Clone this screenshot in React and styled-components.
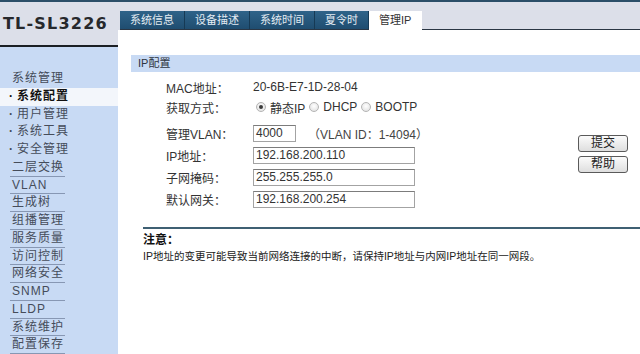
import React from "react";
import styled, { createGlobalStyle } from "styled-components";

const GlobalStyle = createGlobalStyle`
  html, body {
    margin: 0;
    padding: 0;
    background: #ffffff;
  }
  body {
    font-family: "Liberation Sans", "Noto Sans CJK SC", sans-serif;
    font-size: 12px;
    color: #333333;
  }
`;

const Page = styled.div`
  width: 640px;
  height: 354px;
  overflow: hidden;
  border-top: 2px solid #2b4e68;
  box-sizing: border-box;
  display: grid;
  grid-template-columns: 118px 1fr;
  grid-template-rows: 100%;
`;

const LeftColumn = styled.aside`
  display: flex;
  flex-direction: column;
  background: #c8daf4;
`;

const LogoBox = styled.div`
  height: 46px;
  background: #dcdfe9;
  border-bottom: 2px solid #1b1f24;
  display: flex;
  align-items: center;
  padding-left: 3px;
  font-family: "DejaVu Sans", sans-serif;
  font-weight: bold;
  font-size: 16px;
  letter-spacing: 1.2px;
  color: #26282c;
`;

const Menu = styled.ul`
  list-style: none;
  margin: 0;
  padding: 23px 0 0 0;
`;

const MenuItem = styled.li`
  height: 17.75px;
  line-height: 17.75px;
  box-sizing: border-box;
  padding-left: ${({ $sub }) => ($sub ? "9px" : "12px")};
  font-size: 12px;
  letter-spacing: 1px;
  color: ${({ $active }) => ($active ? "#111111" : "#454c5a")};
  font-weight: ${({ $active }) => ($active ? "bold" : "normal")};
  background: ${({ $active }) => ($active ? "#f3f6fb" : "transparent")};
  position: relative;

  &::after {
    content: "";
    display: ${({ $line }) => ($line ? "block" : "none")};
    position: absolute;
    left: 10px;
    width: 55px;
    bottom: 0;
    height: 1px;
    background: #8797b3;
  }
`;

const Bullet = styled.span`
  margin-right: 3px;
  font-weight: bold;
`;

const RightColumn = styled.main`
  display: flex;
  flex-direction: column;
  min-width: 0;
`;

const TopBar = styled.div`
  height: 28px;
  background: #dcdfe9;
  box-sizing: border-box;
  display: flex;
  align-items: flex-end;
  padding-left: 2px;
`;

const Tabs = styled.nav`
  display: flex;
  flex: 1;
  height: 18px;
  border-bottom: 1px solid #2a3644;
`;

const Tab = styled.div`
  height: 18px;
  box-sizing: border-box;
  padding: 0 10px;
  line-height: 18px;
  font-size: 11px;
  white-space: nowrap;
  color: ${({ $active }) => ($active ? "#333333" : "#e4ecf3")};
  background: ${({ $active }) =>
    $active ? "#ffffff" : "linear-gradient(#2f6389, #1f4d70)"};
  border-right: 1px solid ${({ $active }) => ($active ? "#ffffff" : "#163a55")};
  ${({ $active }) =>
    $active ? "height: 20px; margin-bottom: -2px; position: relative;" : ""}
`;

const TabFill = styled.div`
  flex: 1;
`;

const Content = styled.section`
  display: flex;
  flex-direction: column;
  padding-top: 25px;
`;

const SectionBar = styled.div`
  margin-left: 13px;
  height: 17px;
  line-height: 17px;
  background: #c8daf4;
  padding-left: 7px;
  font-size: 11px;
  color: #2d3440;
`;

const FormArea = styled.div`
  display: flex;
  padding-top: 5px;
`;

const Fields = styled.div`
  display: flex;
  flex-direction: column;
`;

const FieldRow = styled.div`
  display: grid;
  grid-template-columns: 87px auto;
  align-items: center;
  height: ${({ $tall }) => ($tall ? "22px" : "20px")};
  margin-bottom: ${({ $gap }) => $gap || 0}px;
  padding-left: 48px;
`;

const Label = styled.span`
  font-size: 12px;
  color: #333333;
  white-space: nowrap;
`;

const Value = styled.div`
  display: flex;
  align-items: center;
  font-size: 12px;
  color: #333333;
  white-space: nowrap;
`;

const TextBox = styled.div`
  width: ${({ $w }) => $w}px;
  height: 17px;
  box-sizing: border-box;
  border: 1px solid #a3a3a3;
  border-top-color: #7c7c7c;
  background: #ffffff;
  padding-left: 2px;
  line-height: 15px;
  font-size: 12px;
  color: #333333;
`;

const Hint = styled.span`
  margin-left: 12px;
  font-size: 12px;
  color: #444444;
`;

const RadioOption = styled.label`
  display: inline-flex;
  align-items: center;
  margin-right: 4px;
  margin-left: ${({ $first }) => ($first ? "3px" : "0")};
`;

const RadioDot = styled.span`
  width: 10px;
  height: 10px;
  box-sizing: border-box;
  border-radius: 50%;
  border: 1px solid #b4b4b4;
  background: radial-gradient(circle at 50% 40%, #ffffff, #dcdcdc);
  margin-right: 4px;
  position: relative;

  &::after {
    content: "";
    display: ${({ $checked }) => ($checked ? "block" : "none")};
    position: absolute;
    left: 2px;
    top: 2px;
    width: 4px;
    height: 4px;
    border-radius: 50%;
    background: #3c3c3c;
  }
`;

const Actions = styled.div`
  margin-left: auto;
  margin-right: 12px;
  margin-top: 58px;
  display: flex;
  flex-direction: column;
  gap: 4px;
`;

const Button = styled.button`
  width: 50px;
  height: 17px;
  padding: 0;
  border: 1px solid #5a5a5a;
  border-radius: 3px;
  background: linear-gradient(#fbfbfb, #dedede);
  font-family: "Liberation Sans", "Noto Sans CJK SC", sans-serif;
  font-size: 12px;
  line-height: 15px;
  color: #222222;
`;

const Notice = styled.div`
  margin-top: 17px;
  margin-left: 25px;
  border-top: 2px solid #3f6073;
  padding-top: 3px;
`;

const NoticeTitle = styled.div`
  font-size: 12px;
  font-weight: bold;
  line-height: 16px;
  color: #111111;
`;

const NoticeText = styled.p`
  margin: 0;
  font-size: 10.5px;
  line-height: 16px;
  color: #222222;
`;

const menu = [
  { label: "系统管理" },
  { label: "系统配置", sub: true, active: true },
  { label: "用户管理", sub: true },
  { label: "系统工具", sub: true },
  { label: "安全管理", sub: true },
  { label: "二层交换", line: true },
  { label: "VLAN", line: true },
  { label: "生成树", line: true },
  { label: "组播管理", line: true },
  { label: "服务质量", line: true },
  { label: "访问控制", line: true },
  { label: "网络安全", line: true },
  { label: "SNMP", line: true },
  { label: "LLDP", line: true },
  { label: "系统维护", line: true },
  { label: "配置保存", line: true },
];

const tabs = ["系统信息", "设备描述", "系统时间", "夏令时", "管理IP"];

const Radio = ({ checked, first, children }) => (
  <RadioOption $first={first}>
    <RadioDot $checked={checked} />
    {children}
  </RadioOption>
);

export default function App() {
  return (
    <>
      <GlobalStyle />
      <Page>
        <LeftColumn>
          <LogoBox>TL-SL3226</LogoBox>
          <Menu>
            {menu.map((item) => (
              <MenuItem
                key={item.label}
                $sub={item.sub}
                $active={item.active}
                $line={item.line}
              >
                {item.sub && <Bullet>·</Bullet>}
                {item.label}
              </MenuItem>
            ))}
          </Menu>
        </LeftColumn>

        <RightColumn>
          <TopBar>
            <Tabs>
              {tabs.map((t) => (
                <Tab key={t} $active={t === "管理IP"}>
                  {t}
                </Tab>
              ))}
              <TabFill />
            </Tabs>
          </TopBar>

          <Content>
            <SectionBar>IP配置</SectionBar>
            <FormArea>
              <Fields>
                <FieldRow>
                  <Label>MAC地址：</Label>
                  <Value>20-6B-E7-1D-28-04</Value>
                </FieldRow>
                <FieldRow $gap={5}>
                  <Label>获取方式：</Label>
                  <Value>
                    <Radio checked first>静态IP</Radio>
                    <Radio>DHCP</Radio>
                    <Radio>BOOTP</Radio>
                  </Value>
                </FieldRow>
                <FieldRow $tall>
                  <Label>管理VLAN：</Label>
                  <Value>
                    <TextBox $w={43}>4000</TextBox>
                    <Hint>（VLAN ID：1-4094）</Hint>
                  </Value>
                </FieldRow>
                <FieldRow $tall>
                  <Label>IP地址：</Label>
                  <Value>
                    <TextBox $w={162}>192.168.200.110</TextBox>
                  </Value>
                </FieldRow>
                <FieldRow $tall>
                  <Label>子网掩码：</Label>
                  <Value>
                    <TextBox $w={162}>255.255.255.0</TextBox>
                  </Value>
                </FieldRow>
                <FieldRow $tall>
                  <Label>默认网关：</Label>
                  <Value>
                    <TextBox $w={162}>192.168.200.254</TextBox>
                  </Value>
                </FieldRow>
              </Fields>
              <Actions>
                <Button type="button">提交</Button>
                <Button type="button">帮助</Button>
              </Actions>
            </FormArea>

            <Notice>
              <NoticeTitle>注意：</NoticeTitle>
              <NoticeText>
                IP地址的变更可能导致当前网络连接的中断，请保持IP地址与内网IP地址在同一网段。
              </NoticeText>
            </Notice>
          </Content>
        </RightColumn>
      </Page>
    </>
  );
}
